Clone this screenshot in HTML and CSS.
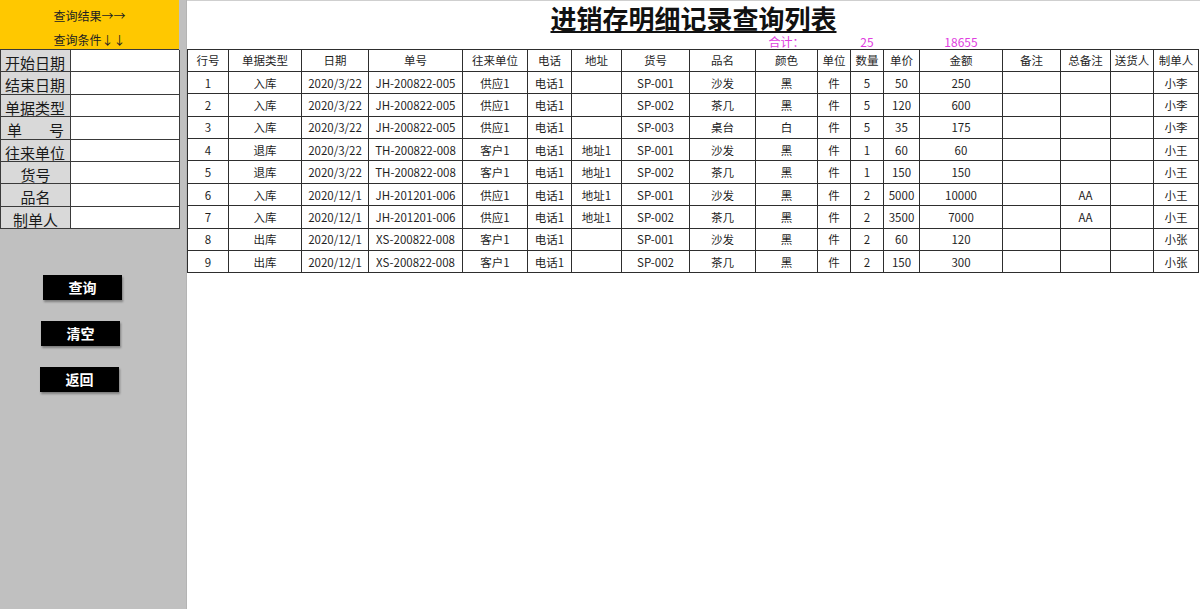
FILE: index.html
```html
<!DOCTYPE html>
<html lang="zh-CN">
<head>
<meta charset="utf-8">
<title>进销存明细记录查询列表</title>
<link rel="stylesheet" href="styles.css">
</head>
<body>
<div class="app">
  <aside class="side">
    <div class="banner">
      <div class="banner-line">查询结果→→</div>
      <div class="banner-line">查询条件↓↓</div>
    </div>
    <div class="form">
      <div class="lbl">开始日期</div><div class="inp"></div>
      <div class="lbl">结束日期</div><div class="inp"></div>
      <div class="lbl">单据类型</div><div class="inp"></div>
      <div class="lbl lbl-split"><span>单</span><span>号</span></div><div class="inp"></div>
      <div class="lbl">往来单位</div><div class="inp"></div>
      <div class="lbl lbl-center">货号</div><div class="inp"></div>
      <div class="lbl lbl-center">品名</div><div class="inp"></div>
      <div class="lbl lbl-center">制单人</div><div class="inp"></div>
    </div>
    <div class="btns">
      <div class="btn btn-a">查询</div>
      <div class="btn btn-b">清空</div>
      <div class="btn btn-c">返回</div>
    </div>
  </aside>
  <main class="main">
    <h1 class="title"><span class="title-text">进销存明细记录查询列表</span></h1>
    <table class="grid">
      <colgroup>
        <col class="c41"><col class="c73"><col class="c67"><col class="c94"><col class="c65"><col class="c44"><col class="c50"><col class="c68"><col class="c66"><col class="c62"><col class="c33"><col class="c33"><col class="c36"><col class="c83"><col class="c58"><col class="c50"><col class="c43"><col class="c45">
      </colgroup>
      <tr class="sum">
        <td></td><td></td><td></td><td></td><td></td><td></td><td></td><td></td><td></td>
        <td>合计：</td><td></td><td>25</td><td></td><td>18655</td><td></td><td></td><td></td><td></td>
      </tr>
      <tr class="head">
        <td>行号</td><td>单据类型</td><td>日期</td><td>单号</td><td>往来单位</td><td>电话</td><td>地址</td><td>货号</td><td>品名</td><td>颜色</td><td>单位</td><td>数量</td><td>单价</td><td>金额</td><td>备注</td><td>总备注</td><td>送货人</td><td>制单人</td>
      </tr>
      <tr><td>1</td><td>入库</td><td>2020/3/22</td><td>JH-200822-005</td><td>供应1</td><td>电话1</td><td></td><td>SP-001</td><td>沙发</td><td>黑</td><td>件</td><td>5</td><td>50</td><td>250</td><td></td><td></td><td></td><td>小李</td></tr>
      <tr><td>2</td><td>入库</td><td>2020/3/22</td><td>JH-200822-005</td><td>供应1</td><td>电话1</td><td></td><td>SP-002</td><td>茶几</td><td>黑</td><td>件</td><td>5</td><td>120</td><td>600</td><td></td><td></td><td></td><td>小李</td></tr>
      <tr><td>3</td><td>入库</td><td>2020/3/22</td><td>JH-200822-005</td><td>供应1</td><td>电话1</td><td></td><td>SP-003</td><td>桌台</td><td>白</td><td>件</td><td>5</td><td>35</td><td>175</td><td></td><td></td><td></td><td>小李</td></tr>
      <tr><td>4</td><td>退库</td><td>2020/3/22</td><td>TH-200822-008</td><td>客户1</td><td>电话1</td><td>地址1</td><td>SP-001</td><td>沙发</td><td>黑</td><td>件</td><td>1</td><td>60</td><td>60</td><td></td><td></td><td></td><td>小王</td></tr>
      <tr><td>5</td><td>退库</td><td>2020/3/22</td><td>TH-200822-008</td><td>客户1</td><td>电话1</td><td>地址1</td><td>SP-002</td><td>茶几</td><td>黑</td><td>件</td><td>1</td><td>150</td><td>150</td><td></td><td></td><td></td><td>小王</td></tr>
      <tr><td>6</td><td>入库</td><td>2020/12/1</td><td>JH-201201-006</td><td>供应1</td><td>电话1</td><td>地址1</td><td>SP-001</td><td>沙发</td><td>黑</td><td>件</td><td>2</td><td>5000</td><td>10000</td><td></td><td>AA</td><td></td><td>小王</td></tr>
      <tr><td>7</td><td>入库</td><td>2020/12/1</td><td>JH-201201-006</td><td>供应1</td><td>电话1</td><td>地址1</td><td>SP-002</td><td>茶几</td><td>黑</td><td>件</td><td>2</td><td>3500</td><td>7000</td><td></td><td>AA</td><td></td><td>小王</td></tr>
      <tr><td>8</td><td>出库</td><td>2020/12/1</td><td>XS-200822-008</td><td>客户1</td><td>电话1</td><td></td><td>SP-001</td><td>沙发</td><td>黑</td><td>件</td><td>2</td><td>60</td><td>120</td><td></td><td></td><td></td><td>小张</td></tr>
      <tr><td>9</td><td>出库</td><td>2020/12/1</td><td>XS-200822-008</td><td>客户1</td><td>电话1</td><td></td><td>SP-002</td><td>茶几</td><td>黑</td><td>件</td><td>2</td><td>150</td><td>300</td><td></td><td></td><td></td><td>小张</td></tr>
    </table>
  </main>
</div>
</body>
</html>
```
FILE: styles.css
```css
* { box-sizing: border-box; }
html, body { margin: 0; padding: 0; }
body {
  width: 1200px;
  height: 609px;
  overflow: hidden;
  font-family: "Noto Sans CJK SC", "Noto Sans", sans-serif;
  color: #1f1f1f;
  background: #fff;
}
.app {
  display: flex;
  height: 609px;
}
.side {
  width: 187px;
  flex: none;
  background: #c0c0c0;
  border-right: 1px solid #b4b4b4;
}
.banner {
  width: 179px;
  height: 49px;
  background: #ffc800;
  display: flex;
  flex-direction: column;
  align-items: center;
  padding-top: 7px;
  gap: 6px;
}
.banner-line {
  font-size: 12px;
  line-height: 18px;
  color: #222;
}
.form {
  width: 179px;
  display: grid;
  grid-template-columns: 70px 109px;
  grid-auto-rows: 22.4px;
  border-top: 1px solid #3a3a3a;
  border-left: 1px solid #3a3a3a;
}
.lbl, .inp {
  border-right: 1px solid #3a3a3a;
  border-bottom: 1px solid #3a3a3a;
  overflow: hidden;
}
.inp { background: #fff; }
.lbl {
  background: #d9d9d9;
  font-size: 15px;
  line-height: 15px;
  padding: 5px 0 0 4px;
  color: #1a1a1a;
  white-space: nowrap;
}
.lbl-center {
  text-align: center;
  padding-left: 0;
}
.lbl-split {
  display: flex;
  justify-content: space-between;
  padding-left: 6px;
  padding-right: 6px;
}
.btns {
  display: flex;
  flex-direction: column;
  gap: 21px;
  padding-top: 46px;
}
.btn {
  width: 79px;
  height: 25px;
  background: #000;
  color: #fff;
  font-weight: 700;
  font-size: 14px;
  line-height: 25px;
  text-align: center;
  box-shadow: 1px 2px 2px rgba(0, 0, 0, 0.35);
}
.btn-a { margin-left: 43px; }
.btn-b { margin-left: 41px; }
.btn-c { margin-left: 40px; }

.main {
  flex: 1;
  border-top: 1px solid #cfcfcf;
  background: #fff;
}
.title {
  margin: 0;
  height: 33px;
  text-align: center;
  font-size: 26px;
  line-height: 33px;
  font-weight: 700;
  color: #111;
}
.title-text {
  text-decoration: underline;
  text-decoration-thickness: 2px;
  text-underline-offset: 2px;
}
.grid {
  border-collapse: collapse;
  table-layout: fixed;
  width: 1012px;
  font-size: 11.5px;
  color: #1f1f1f;
}
.grid td {
  padding: 0;
  text-align: center;
  white-space: nowrap;
  overflow: hidden;
  border: 1px solid #2e2e2e;
  height: 22.4px;
  line-height: 20px;
}
.grid .sum td {
  border: none;
  border-bottom: 1px solid #2e2e2e;
  height: 15px;
  line-height: 14px;
  vertical-align: bottom;
  font-size: 12px;
  color: #e040e0;
}
.c41 { width: 41px; }
.c73 { width: 73px; }
.c67 { width: 67px; }
.c94 { width: 94px; }
.c65 { width: 65px; }
.c44 { width: 44px; }
.c50 { width: 50px; }
.c68 { width: 68px; }
.c66 { width: 66px; }
.c62 { width: 62px; }
.c33 { width: 33px; }
.c36 { width: 36px; }
.c83 { width: 83px; }
.c58 { width: 58px; }
.c43 { width: 43px; }
.c45 { width: 45px; }
```
